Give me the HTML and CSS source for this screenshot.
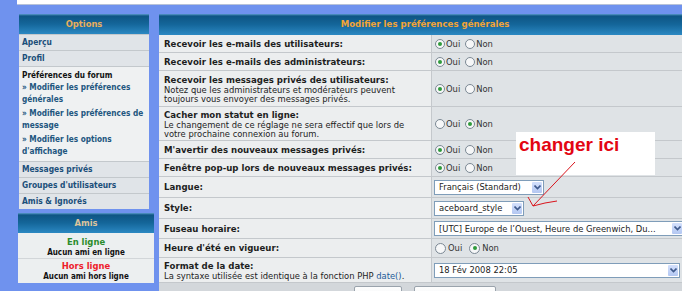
FILE: index.html
```html
<!DOCTYPE html>
<html>
<head>
    <meta charset="utf-8">
    <title>Modifier les préférences générales</title>
    <link rel="stylesheet" href="styles.css">
</head>
<body>
    <div class="topbar"></div>
    <div class="page">
        <div class="sidebar">
            <div class="box options">
                <div class="box-head">Options</div>
                <a class="menu-item">Aperçu</a>
                <a class="menu-item">Profil</a>
                <div class="menu-section">
                    <div class="section-title">Préférences du forum</div>
                    <a class="sub-item">» Modifier les préférences<br>générales</a>
                    <a class="sub-item">» Modifier les préférences de<br>message</a>
                    <a class="sub-item">» Modifier les options<br>d'affichage</a>
                </div>
                <a class="menu-item">Messages privés</a>
                <a class="menu-item">Groupes d'utilisateurs</a>
                <a class="menu-item">Amis &amp; Ignorés</a>
            </div>
            <div class="box friends">
                <div class="box-head">Amis</div>
                <div class="friends-body">
                    <div class="group">
                        <div class="online">En ligne</div>
                        <div class="nobody">Aucun ami en ligne</div>
                    </div>
                    <div class="group second">
                        <div class="offline">Hors ligne</div>
                        <div class="nobody">Aucun ami hors ligne</div>
                    </div>
                </div>
            </div>
        </div>

        <div class="panel">
            <div class="panel-head">Modifier les préférences générales</div>

            <div class="row h17">
                <div class="label"><span class="t">Recevoir les e-mails des utilisateurs:</span></div>
                <div class="value"><span class="radio on"></span><span class="opt">Oui</span><span class="radio"></span><span class="opt">Non</span></div>
            </div>
            <div class="row h17">
                <div class="label"><span class="t">Recevoir les e-mails des administrateurs:</span></div>
                <div class="value"><span class="radio on"></span><span class="opt">Oui</span><span class="radio"></span><span class="opt">Non</span></div>
            </div>
            <div class="row h35">
                <div class="label">
                    <span class="t">Recevoir les messages privés des utilisateurs:</span>
                    <span class="ex">Notez que les administrateurs et modérateurs peuvent<br>toujours vous envoyer des messages privés.</span>
                </div>
                <div class="value"><span class="radio on"></span><span class="opt">Oui</span><span class="radio"></span><span class="opt">Non</span></div>
            </div>
            <div class="row h33">
                <div class="label">
                    <span class="t">Cacher mon statut en ligne:</span>
                    <span class="ex">Le changement de ce réglage ne sera effectif que lors de<br>votre prochaine connexion au forum.</span>
                </div>
                <div class="value"><span class="radio"></span><span class="opt">Oui</span><span class="radio on"></span><span class="opt">Non</span></div>
            </div>
            <div class="row h17">
                <div class="label"><span class="t">M'avertir des nouveaux messages privés:</span></div>
                <div class="value"><span class="radio on"></span><span class="opt">Oui</span><span class="radio"></span><span class="opt">Non</span></div>
            </div>
            <div class="row h17">
                <div class="label"><span class="t">Fenêtre pop-up lors de nouveaux messages privés:</span></div>
                <div class="value"><span class="radio on"></span><span class="opt">Oui</span><span class="radio"></span><span class="opt">Non</span></div>
            </div>
            <div class="row h20">
                <div class="label"><span class="t">Langue:</span></div>
                <div class="value">
                    <div class="select w110"><span class="sel-text">Français (Standard)</span><span class="sel-btn"><svg width="7" height="5" viewBox="0 0 7 5"><path d="M0.5 0.5 L3.5 3.5 L6.5 0.5" fill="none" stroke="#3f5a8c" stroke-width="1.6"/></svg></span></div>
                </div>
            </div>
            <div class="row h20">
                <div class="label"><span class="t">Style:</span></div>
                <div class="value">
                    <div class="select w90"><span class="sel-text">aceboard_style</span><span class="sel-btn"><svg width="7" height="5" viewBox="0 0 7 5"><path d="M0.5 0.5 L3.5 3.5 L6.5 0.5" fill="none" stroke="#3f5a8c" stroke-width="1.6"/></svg></span></div>
                </div>
            </div>
            <div class="row h19">
                <div class="label"><span class="t">Fuseau horaire:</span></div>
                <div class="value">
                    <div class="select w250"><span class="sel-text">[UTC] Europe de l’Ouest, Heure de Greenwich, Du...</span><span class="sel-btn"><svg width="7" height="5" viewBox="0 0 7 5"><path d="M0.5 0.5 L3.5 3.5 L6.5 0.5" fill="none" stroke="#3f5a8c" stroke-width="1.6"/></svg></span></div>
                </div>
            </div>
            <div class="row h18">
                <div class="label"><span class="t">Heure d'été en vigueur:</span></div>
                <div class="value wide-radios"><span class="radio"></span><span class="opt">Oui</span><span class="radio on"></span><span class="opt">Non</span></div>
            </div>
            <div class="row h24">
                <div class="label">
                    <span class="t">Format de la date:</span>
                    <span class="ex">La syntaxe utilisée est identique à la fonction PHP <a class="link">date()</a>.</span>
                </div>
                <div class="value">
                    <div class="select w246"><span class="sel-text">18 Fév 2008 22:05</span><span class="sel-btn"><svg width="7" height="5" viewBox="0 0 7 5"><path d="M0.5 0.5 L3.5 3.5 L6.5 0.5" fill="none" stroke="#3f5a8c" stroke-width="1.6"/></svg></span></div>
                </div>
            </div>

            <div class="actions">
                <button class="btn w48">Envoyer</button>
                <button class="btn w82">Réinitialiser</button>
            </div>
        </div>
    </div>

    <!-- annotation pasted over the screenshot -->
    <div class="note">changer ici</div>
    <svg class="arrow" width="682" height="291" viewBox="0 0 682 291">
        <path d="M575 162 L533 206" fill="none" stroke="#d9141c" stroke-width="1"/>
        <path d="M528 197 L533 206 L545 203 L557 201" fill="none" stroke="#d9141c" stroke-width="1"/>
    </svg>
</body>
</html>
```

FILE: styles.css
```css
body {
    margin: 0;
    background-color: #6f92ee;
    font-family: "DejaVu Sans", Verdana, sans-serif;
    color: #222;
    overflow: hidden;
}
.topbar {
    height: 4px;
    margin-left: 17px;
    background-color: #fff;
    border-bottom: 1px solid #b7c2d8;
}
.page {
    display: flex;
    align-items: flex-start;
    margin-top: 9px;
}

/* left column */
.sidebar {
    width: 136px;
    margin-left: 18px;
    flex-shrink: 0;
    display: flex;
    flex-direction: column;
    font-family: "DejaVu Sans Condensed", "DejaVu Sans", sans-serif;
}
.options {
    width: 130px;
    margin-left: 1px;
}
.friends {
    margin-top: 4px;
}
.box-head {
    height: 20px;
    line-height: 20px;
    text-align: center;
    font-family: "DejaVu Sans", sans-serif;
    font-weight: bold;
    font-size: 8.4px;
    color: #e8ae5c;
    background: linear-gradient(to bottom, #5a9bcc 0, #0e5584 2px, #14669a 50%, #2b88c2 100%);
}
.friends .box-head {
    color: #dcc49c;
}
.menu-item {
    display: block;
    height: 15px;
    line-height: 15px;
    padding-left: 3px;
    border-top: 1px solid #c3c8cc;
    background-color: #e0e4e8;
    font-weight: bold;
    font-size: 8.4px;
    color: #1b4f7a;
    white-space: nowrap;
}
.menu-section {
    height: 95px;
    box-sizing: border-box;
    padding: 2px 0 0 3px;
    border-top: 1px solid #c3c8cc;
    background-color: #eff1f2;
    font-weight: bold;
    font-size: 8.2px;
    line-height: 12px;
    white-space: nowrap;
}
.section-title {
    color: #111;
}
.sub-item {
    display: block;
    color: #22567f;
}
.sub-item + .sub-item {
    margin-top: 2px;
}
.friends-body {
    height: 50px;
    box-sizing: border-box;
    padding-top: 3px;
    background-color: #eceff0;
    text-align: center;
    font-weight: bold;
    line-height: 11px;
}
.group.second {
    border-top: 1px solid #d2d6d9;
    padding-top: 1px;
}
.online {
    color: #2b8c2b;
    font-size: 9.4px;
}
.offline {
    color: #ee1c2c;
    font-size: 9.4px;
}
.nobody {
    color: #111;
    font-size: 8px;
}

/* main panel */
.panel {
    width: 532px;
    margin-left: 5px;
    flex-shrink: 0;
}
.panel-head {
    height: 21px;
    line-height: 21px;
    text-align: center;
    font-weight: bold;
    font-size: 8.6px;
    color: #f2a436;
    background: linear-gradient(to bottom, #5a9bcc 0, #0e5584 2px, #14669a 50%, #2b88c2 100%);
}
.row {
    display: grid;
    grid-template-columns: 272px 1fr;
    border-bottom: 1px solid #c4c8cc;
}
.h17 { height: 17px; }
.h18 { height: 18px; }
.h19 { height: 19px; }
.h20 { height: 20px; }
.h24 { height: 24px; }
.h33 { height: 33px; }
.h35 { height: 35px; }
.label {
    display: flex;
    flex-direction: column;
    justify-content: center;
    padding-left: 5px;
    background-color: #eceeef;
    white-space: nowrap;
}
.t {
    font-weight: bold;
    font-size: 8.6px;
    line-height: 12px;
    color: #1e1e1e;
}
.ex {
    font-size: 8.4px;
    line-height: 9px;
    color: #222;
}
.link {
    color: #1c5a98;
}
.value {
    display: flex;
    align-items: center;
    padding-left: 3px;
    border-left: 1px solid #c4c8cc;
    background-color: #dfe3e6;
    white-space: nowrap;
}
.radio {
    width: 10px;
    height: 10px;
    box-sizing: border-box;
    border: 1px solid #7b8894;
    border-radius: 50%;
    background-color: #f6f7f8;
    display: flex;
    align-items: center;
    justify-content: center;
}
.radio.on::after {
    content: "";
    width: 4px;
    height: 4px;
    border-radius: 50%;
    background-color: #2f9a3c;
}
.opt {
    font-size: 8.4px;
    margin-left: 1px;
    margin-right: 5px;
    color: #333;
}
.wide-radios .radio {
    width: 11px;
    height: 11px;
}
.wide-radios .opt {
    margin-left: 2px;
    margin-right: 7px;
}
.select {
    display: flex;
    align-items: center;
    height: 15px;
    box-sizing: border-box;
    margin-left: -1px;
    border: 1px solid #7f9db9;
    background-color: #fff;
    font-size: 8.4px;
    color: #222;
}
.w90 { width: 90px; }
.w110 { width: 110px; }
.w246 { width: 246px; }
.w250 { width: 250px; }
.sel-text {
    flex: 1;
    padding-left: 4px;
    overflow: hidden;
}
.sel-btn {
    width: 10px;
    height: 11px;
    margin-right: 1px;
    display: flex;
    align-items: center;
    justify-content: center;
    border-radius: 1px;
    background: linear-gradient(to bottom, #d3e0fc, #b3c7f2);
}
.actions {
    display: flex;
    justify-content: center;
    gap: 12px;
    height: 40px;
    padding-top: 3px;
    background-color: #d3d7db;
}
.btn {
    height: 34px;
    padding: 14px 0 0;
    border: 1px solid #9aa3ac;
    border-radius: 2px;
    background: linear-gradient(to bottom, #fdfdfd, #e8ebee);
    font-family: "DejaVu Sans", sans-serif;
    font-size: 8.4px;
    color: #222;
}
.w48 { width: 48px; }
.w82 { width: 82px; }

/* annotation */
.note {
    position: absolute;
    left: 516px;
    top: 132px;
    width: 139px;
    height: 43px;
    box-sizing: border-box;
    padding: 2px 0 0 3px;
    background-color: #fff;
    font-family: "Liberation Sans", Arial, sans-serif;
    font-weight: bold;
    font-size: 19px;
    line-height: 22px;
    color: #e30613;
}
.arrow {
    position: absolute;
    left: 0;
    top: 0;
    pointer-events: none;
}
```
